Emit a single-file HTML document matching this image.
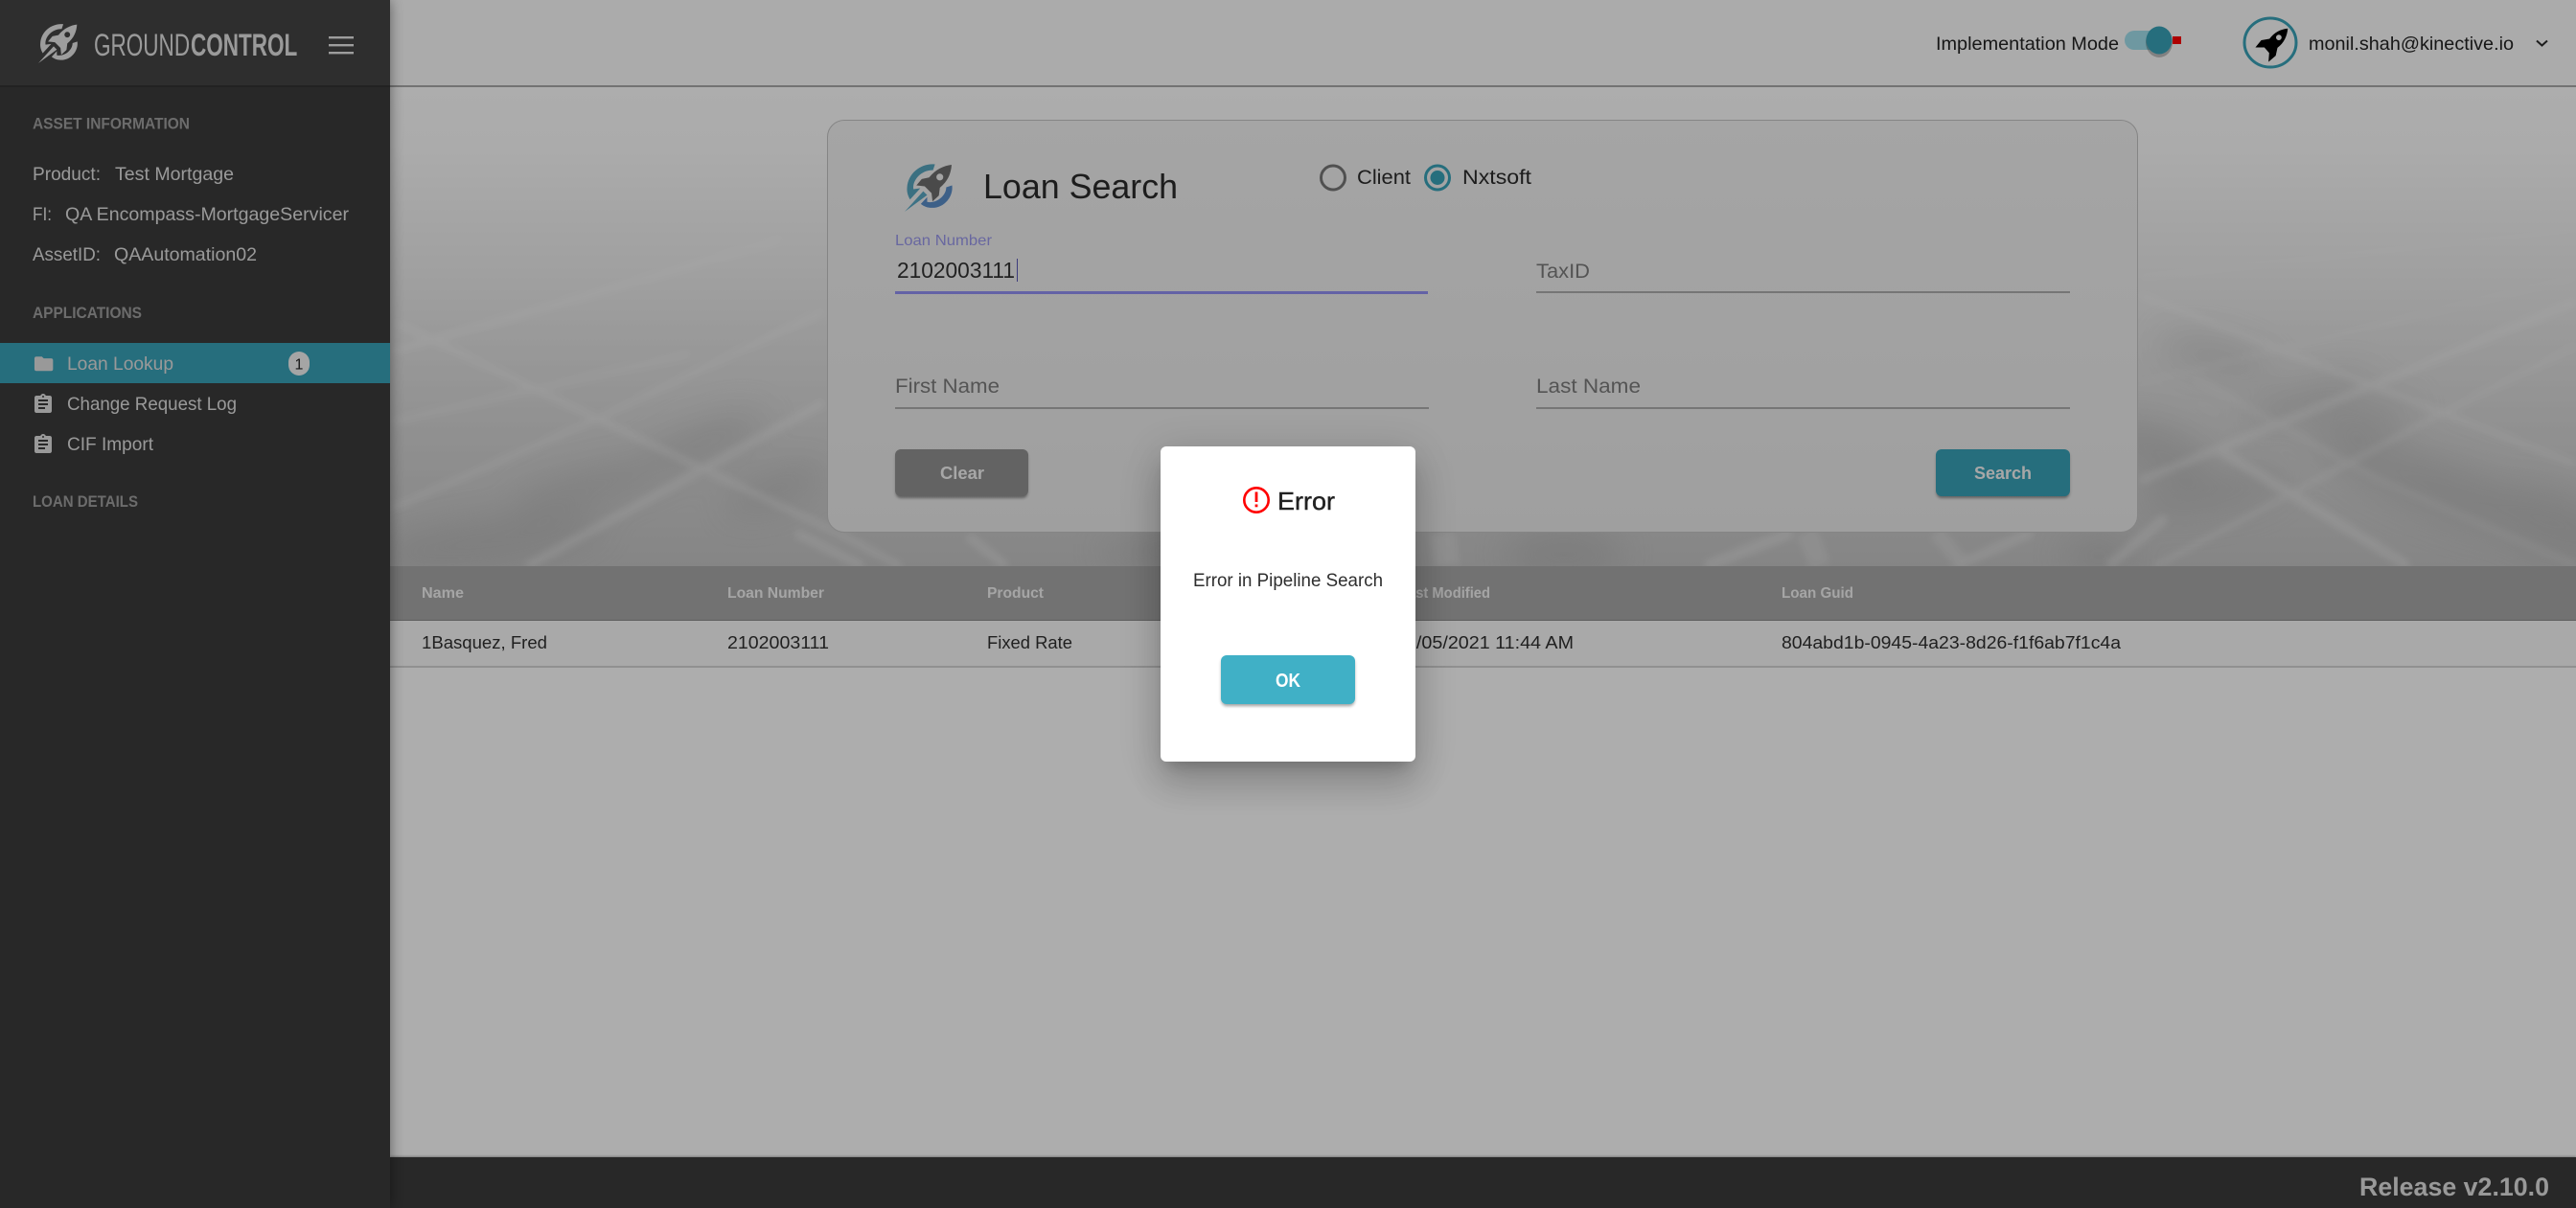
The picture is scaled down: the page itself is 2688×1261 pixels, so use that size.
<!DOCTYPE html>
<html lang="en">
<head>
<meta charset="utf-8">
<title>GroundControl - Loan Search</title>
<style>
html,body{margin:0;padding:0;width:2688px;height:1261px;overflow:hidden;background:#fff;font-family:"Liberation Sans",sans-serif}
.abs{position:absolute}
svg{position:absolute;left:0;top:0;display:block}
svg text{font-family:"Liberation Sans",sans-serif}
#topbar{left:407px;top:0;width:2281px;height:89px;background:#fdfdfd;border-bottom:2px solid #aaa}
#hero{left:407px;top:91px;width:2281px;height:500px;overflow:hidden}
#card{left:863px;top:125px;width:1366px;height:429px;border:1.5px solid #c4c4c4;border-radius:18px;background:linear-gradient(#f3f3f3,#ebebeb)}
#thead{left:407px;top:591px;width:2281px;height:56px;background:#a9a9a9;border-bottom:1px solid #8c8c8c}
#trow{left:407px;top:648px;width:2281px;height:47px;background:#fafafa;border-bottom:2px solid #d4d4d4}
#side{left:0;top:0;width:407px;height:1261px;background:#3c3c3c;box-shadow:0 0 14px rgba(0,0,0,.45)}
#sidehead{left:0;top:0;width:407px;height:89px;background:#444;border-bottom:2px solid #333}
#active{left:0;top:358px;width:407px;height:42px;background:#38a2b8}
#foot{left:407px;top:1208px;width:2281px;height:53px;background:#3b3b3b;box-shadow:0 -1px 2px rgba(0,0,0,.3)}
.btn{top:469px;width:139px;height:49px;border-radius:6px;box-shadow:0 3px 2px -1px rgba(0,0,0,.25),0 2px 3px rgba(0,0,0,.16)}
#clear{left:934px;background:#929292}
#search{left:2020px;width:140px;background:#38a2b8}
.ul{height:2px;background:#aeaeae}
#backdrop{left:0;top:0;width:2688px;height:1261px;background:rgba(0,0,0,.32)}
#dialog{left:1211px;top:466px;width:266px;height:329px;background:#fff;border-radius:6px;box-shadow:0 11px 15px -7px rgba(0,0,0,.2),0 24px 38px 3px rgba(0,0,0,.14),0 9px 46px 8px rgba(0,0,0,.12)}
#ok{left:1274px;top:684px;width:140px;height:51px;background:#40b0c6;border-radius:6px;box-shadow:0 3px 3px -1px rgba(0,0,0,.25),0 2px 3px rgba(0,0,0,.16)}
</style>
</head>
<body>
<div class="abs" id="topbar"></div>

<div class="abs" id="hero">
<svg width="2281" height="500" viewBox="407 91 2281 500">
<defs>
<linearGradient id="bg" x1="0" y1="91" x2="0" y2="591" gradientUnits="userSpaceOnUse">
<stop offset="0" stop-color="#ffffff"/><stop offset=".12" stop-color="#fdfdfd"/><stop offset=".42" stop-color="#eaeaea"/><stop offset=".72" stop-color="#d5d5d5"/><stop offset="1" stop-color="#c5c5c5"/>
</linearGradient>
<filter id="b3" x="-20%" y="-20%" width="140%" height="140%"><feGaussianBlur stdDeviation="4"/></filter>
<filter id="b18" x="-30%" y="-60%" width="160%" height="220%"><feGaussianBlur stdDeviation="18"/></filter>
</defs>
<rect x="407" y="91" width="2281" height="500" fill="url(#bg)"/>
<g filter="url(#b18)" fill="#a8a8a8" opacity=".42">
<ellipse cx="733" cy="463" rx="70" ry="20" transform="rotate(-22 733 463)"/>
<ellipse cx="810" cy="510" rx="55" ry="18" transform="rotate(-22 810 510)"/>
<ellipse cx="617" cy="507" rx="85" ry="18" transform="rotate(-15 617 507)"/>
<ellipse cx="510" cy="565" rx="120" ry="24" transform="rotate(-8 510 565)"/>
<ellipse cx="2313" cy="372" rx="60" ry="16" transform="rotate(15 2313 372)"/>
<ellipse cx="2407" cy="418" rx="70" ry="18" transform="rotate(-18 2407 418)"/>
<ellipse cx="2463" cy="442" rx="60" ry="18" transform="rotate(-18 2463 442)"/>
<ellipse cx="2307" cy="515" rx="80" ry="20" transform="rotate(-10 2307 515)"/>
<ellipse cx="2550" cy="510" rx="130" ry="30" transform="rotate(20 2550 510)"/>
<ellipse cx="2660" cy="545" rx="80" ry="34" transform="rotate(20 2660 545)"/>
<ellipse cx="2250" cy="470" rx="60" ry="28" transform="rotate(20 2250 470)"/>
<ellipse cx="1632" cy="578" rx="60" ry="30"/>
<ellipse cx="1250" cy="575" rx="100" ry="20"/>
<ellipse cx="2190" cy="580" rx="36" ry="22"/>
</g>
<g filter="url(#b3)" stroke="#ffffff" fill="none" opacity=".28">
<path d="M410 367L816 250" stroke-width="7"/>
<path d="M410 530L617 440L860 325" stroke-width="6"/>
<path d="M410 440L720 370" stroke-width="8" opacity=".7"/>
<path d="M413 337L867 553L940 591" stroke-width="7"/>
<path d="M550 591L860 420" stroke-width="9"/>
<path d="M2233 502L2688 315" stroke-width="8"/>
<path d="M2247 592L2547 432L2688 362" stroke-width="5"/>
<path d="M2233 308L2688 485" stroke-width="6"/>
<path d="M2313 468L2513 591" stroke-width="10"/>
<path d="M2233 290L2688 240" stroke-width="6" opacity=".5"/>
<path d="M2233 400L2688 290" stroke-width="6" opacity=".5"/>
<path d="M2290 395L2480 500L2688 590" stroke-width="7" opacity=".6"/>
<path d="M420 240L700 205" stroke-width="5" opacity=".4"/>
<path d="M830 556L900 591" stroke-width="9"/>
<path d="M1010 560L1050 591" stroke-width="9"/>
<path d="M1505 556L1510 591" stroke-width="26" opacity=".8"/>
<path d="M1780 591L1870 556" stroke-width="11"/>
<path d="M1885 556L1900 591" stroke-width="22" opacity=".7"/>
<path d="M2020 556L2050 591" stroke-width="16" opacity=".7"/>
<path d="M2040 591L2120 556" stroke-width="9"/>
<path d="M2200 591L2260 540" stroke-width="10"/>
</g>
</svg>
</div>

<div class="abs" id="card"></div>
<div class="abs ul" style="left:934px;top:304px;width:556px;height:3px;background:#9391f5"></div>
<div class="abs ul" style="left:1603px;top:304px;width:557px"></div>
<div class="abs ul" style="left:934px;top:425px;width:557px"></div>
<div class="abs ul" style="left:1603px;top:425px;width:557px"></div>
<div class="abs btn" id="clear"></div>
<div class="abs btn" id="search"></div>
<div class="abs" style="left:1061px;top:270px;width:1px;height:24px;background:#5a58b8"></div>

<div class="abs" id="thead"></div>
<div class="abs" id="trow"></div>
<div class="abs" id="foot"></div>

<div class="abs" id="side"></div>
<div class="abs" id="sidehead"></div>
<div class="abs" id="active"></div>

<svg width="2688" height="1261" viewBox="0 0 2688 1261">
<defs>
<path id="rk" d="M96 4C80 6 64 13 50 30L35 33L24 46L41 48L55 62L57 79L70 67L72 51C88 38 95 22 96 4ZM72 22A7 7 0 1 1 71.9 22Z" fill-rule="evenodd"/>
<path id="rkb" d="M98 2C76 4 58 14 45 32L21 36L4 57L30 57L44 73L42 99L63 81L68 58C87 44 96 24 98 2ZM72 20A8 8 0 1 1 71.9 20Z" fill-rule="evenodd"/>
<path id="clip" d="M19 3h-4.18C14.4 1.84 13.3 1 12 1c-1.3 0-2.4.84-2.82 2H5c-1.1 0-2 .9-2 2v14c0 1.1.9 2 2 2h14c1.1 0 2-.9 2-2V5c0-1.1-.9-2-2-2zm-7 0c.55 0 1 .45 1 1s-.45 1-1 1-1-.45-1-1 .45-1 1-1zm2 14H7v-2h7v2zm3-4H7v-2h10v2zm0-4H7V7h10v2z"/>
</defs>

<!-- brand -->
<g transform="translate(40,24) scale(.42)" fill="#e8e8e8">
<use href="#rk"/>
<path d="M62 3C35 0 7 20 5 50C4 60 7 68 11 75L32 52L18 54C15 35 35 14 58 15Z"/>
<path d="M97 46C100 70 80 93 55 92C47 92 39 89 33 84L46 70L46 80C64 84 85 68 85 50Z"/>
<path d="M38 58L46 66L0 100Z"/>
<path d="M16 84L36 62L42 68Z"/>
</g>
<g fill="#e4e4e4" font-size="32">
<text transform="translate(98,58) scale(.7,1)" textLength="143" lengthAdjust="spacingAndGlyphs">GROUND</text>
<text transform="translate(199,58) scale(.7,1)" font-weight="700" textLength="159" lengthAdjust="spacingAndGlyphs">CONTROL</text>
</g>
<g fill="#e8e8e8"><rect x="343" y="38" width="26" height="2.4"/><rect x="343" y="46" width="26" height="2.4"/><rect x="343" y="54" width="26" height="2.4"/></g>

<!-- sidebar -->
<g fill="#a0a0a0" font-size="16.5" font-weight="700">
<text x="34" y="134.5" textLength="164" lengthAdjust="spacingAndGlyphs">ASSET INFORMATION</text>
<text x="34" y="332" textLength="114" lengthAdjust="spacingAndGlyphs">APPLICATIONS</text>
<text x="34" y="529" textLength="110" lengthAdjust="spacingAndGlyphs">LOAN DETAILS</text>
</g>
<g fill="#e2e2e2" font-size="19.5">
<text x="34" y="188" textLength="71" lengthAdjust="spacingAndGlyphs">Product:</text>
<text x="120" y="188" textLength="124" lengthAdjust="spacingAndGlyphs">Test Mortgage</text>
<text x="34" y="230" textLength="20" lengthAdjust="spacingAndGlyphs">FI:</text>
<text x="68" y="230" textLength="296" lengthAdjust="spacingAndGlyphs">QA Encompass-MortgageServicer</text>
<text x="34" y="272" textLength="71" lengthAdjust="spacingAndGlyphs">AssetID:</text>
<text x="119" y="272" textLength="149" lengthAdjust="spacingAndGlyphs">QAAutomation02</text>
<text x="70" y="386" textLength="111" lengthAdjust="spacingAndGlyphs">Loan Lookup</text>
<text x="70" y="428" textLength="177" lengthAdjust="spacingAndGlyphs">Change Request Log</text>
<text x="70" y="470" textLength="90" lengthAdjust="spacingAndGlyphs">CIF Import</text>
</g>
<g fill="#e2e2e2">
<path transform="translate(34,368.5) scale(.97,.94)" d="M10 4H4c-1.1 0-1.99.9-1.99 2L2 18c0 1.1.9 2 2 2h16c1.1 0 2-.9 2-2V8c0-1.1-.9-2-2-2h-8l-2-2z"/>
<use href="#clip" transform="translate(33,410)"/>
<use href="#clip" transform="translate(33,452)"/>
<rect x="301" y="367" width="22" height="25" rx="11" fill="#f4f4f4"/>
</g>
<text x="312" y="385.5" text-anchor="middle" font-size="16" fill="#222">1</text>

<!-- header -->
<g fill="#222" font-size="19.5">
<text x="2020" y="52" textLength="191" lengthAdjust="spacingAndGlyphs">Implementation Mode</text>
<text x="2409" y="52" textLength="214" lengthAdjust="spacingAndGlyphs">monil.shah@kinective.io</text>
</g>
<rect x="2217" y="32" width="44" height="20" rx="10" fill="#a2e0ed"/>
<rect x="2267" y="38" width="9" height="8" fill="#ff0000"/>
<ellipse cx="2253" cy="44" rx="14" ry="16" fill="rgba(0,0,0,.25)"/>
<ellipse cx="2253" cy="42" rx="13.5" ry="14.5" fill="#38a2b8"/>
<ellipse cx="2369" cy="44.5" rx="27" ry="25.5" fill="none" stroke="#38a2b8" stroke-width="3"/>
<use href="#rkb" transform="translate(2352,29) scale(.36)" fill="#000"/>
<path d="M2647 42.5l5.5 5 5.5-5" fill="none" stroke="#2c2c2c" stroke-width="2"/>

<!-- card -->
<g transform="translate(944,170) scale(.51)">
<path d="M62 3C35 0 7 20 5 50C4 60 7 68 11 75L32 52L18 54C15 35 35 14 58 15Z" fill="#58a5bf"/>
<path d="M97 46C100 70 80 93 55 92C47 92 39 89 33 84L46 70L46 80C64 84 85 68 85 50Z" fill="#5b8ec9"/>
<use href="#rk" fill="#6d6d6d"/>
<path d="M38 58L46 66L0 100Z" fill="#5ba9c4"/>
<path d="M16 84L36 62L42 68Z" fill="#5ba9c4"/>
</g>
<text x="1026" y="207" textLength="203" lengthAdjust="spacingAndGlyphs" font-size="36" fill="#2b2b2b">Loan Search</text>
<circle cx="1391" cy="185.5" r="12.5" fill="none" stroke="#777" stroke-width="3"/>
<text x="1416" y="192" textLength="56" lengthAdjust="spacingAndGlyphs" font-size="21" fill="#2b2b2b">Client</text>
<circle cx="1500" cy="185.5" r="12.5" fill="none" stroke="#38a2b8" stroke-width="3"/>
<circle cx="1500" cy="185.5" r="7.5" fill="#38a2b8"/>
<text x="1526" y="192" textLength="72" lengthAdjust="spacingAndGlyphs" font-size="21" fill="#2b2b2b">Nxtsoft</text>
<text x="934" y="256" textLength="101" lengthAdjust="spacingAndGlyphs" font-size="16" fill="#9a98ec">Loan Number</text>
<text x="936" y="290" textLength="123" lengthAdjust="spacingAndGlyphs" font-size="23" fill="#333">2102003111</text>
<g font-size="21" fill="#7c7c7c">
<text x="1603" y="290" textLength="56" lengthAdjust="spacingAndGlyphs">TaxID</text>
<text x="934" y="410" textLength="109" lengthAdjust="spacingAndGlyphs">First Name</text>
<text x="1603" y="410" textLength="109" lengthAdjust="spacingAndGlyphs">Last Name</text>
</g>
<g font-size="18" font-weight="700" fill="#f6f6f6">
<text x="981" y="500" textLength="46" lengthAdjust="spacingAndGlyphs">Clear</text>
<text x="2060" y="500" textLength="60" lengthAdjust="spacingAndGlyphs">Search</text>
</g>

<!-- table -->
<g font-size="16" font-weight="700" fill="#f4f4f4">
<text x="440" y="624" textLength="44" lengthAdjust="spacingAndGlyphs">Name</text>
<text x="759" y="624" textLength="101" lengthAdjust="spacingAndGlyphs">Loan Number</text>
<text x="1030" y="624" textLength="59" lengthAdjust="spacingAndGlyphs">Product</text>
<text x="1460" y="624" textLength="95" lengthAdjust="spacingAndGlyphs">Last Modified</text>
<text x="1859" y="624" textLength="75" lengthAdjust="spacingAndGlyphs">Loan Guid</text>
</g>
<g font-size="18.5" fill="#303030">
<text x="440" y="677" textLength="131" lengthAdjust="spacingAndGlyphs">1Basquez, Fred</text>
<text x="759" y="677" textLength="106" lengthAdjust="spacingAndGlyphs">2102003111</text>
<text x="1030" y="677" textLength="89" lengthAdjust="spacingAndGlyphs">Fixed Rate</text>
<text x="1456" y="677" textLength="186" lengthAdjust="spacingAndGlyphs">01/05/2021 11:44 AM</text>
<text x="1859" y="677" textLength="354" lengthAdjust="spacingAndGlyphs">804abd1b-0945-4a23-8d26-f1f6ab7f1c4a</text>
</g>

<!-- footer -->
<text x="2462" y="1248" textLength="198" lengthAdjust="spacingAndGlyphs" font-size="27" font-weight="700" fill="#e2e2e2">Release v2.10.0</text>
</svg>

<div class="abs" id="backdrop"></div>
<div class="abs" id="dialog"></div>
<div class="abs" id="ok"></div>

<svg width="2688" height="1261" viewBox="0 0 2688 1261">
<circle cx="1311" cy="522" r="12.7" fill="none" stroke="#f00" stroke-width="2.6"/>
<rect x="1309.6" y="513.5" width="2.8" height="10.5" fill="#f00"/>
<rect x="1309.6" y="526.5" width="2.8" height="2.8" fill="#f00"/>
<text x="1333" y="532" textLength="60" lengthAdjust="spacingAndGlyphs" font-size="26" fill="#222" stroke="#222" stroke-width=".4">Error</text>
<text x="1245" y="612" textLength="198" lengthAdjust="spacingAndGlyphs" font-size="19.5" fill="#2e2e2e">Error in Pipeline Search</text>
<text x="1331" y="717" textLength="26" lengthAdjust="spacingAndGlyphs" font-size="20" font-weight="700" fill="#fff">OK</text>
</svg>
</body>
</html>
